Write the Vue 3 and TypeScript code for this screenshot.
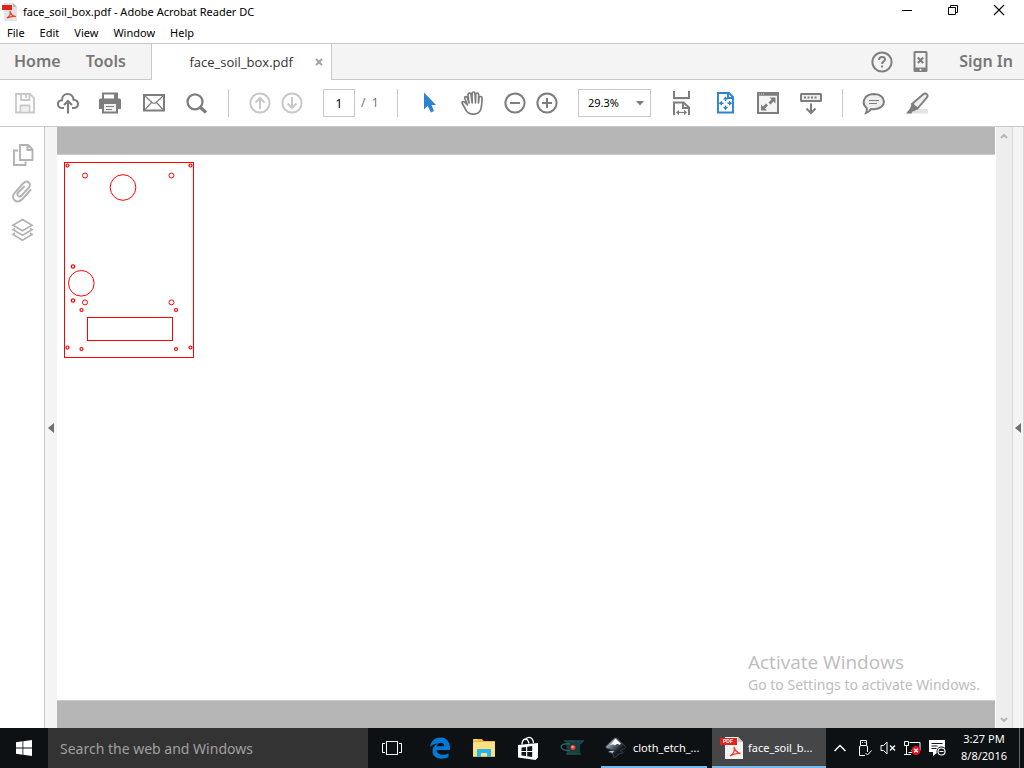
<script setup lang="ts">
import { ref } from 'vue'

const menus: string[] = ['File', 'Edit', 'View', 'Window', 'Help']
const pageNumber = ref('1')
const zoomLevel = ref('29.3%')
const zoomLevels: string[] = ['29.3%', '50%', '100%', '200%']
const query = ref('')

interface Hole { x: number; y: number; r: number }
const holes: Hole[] = [
  { x: 3.5, y: 3.5, r: 1.5 },
  { x: 126.5, y: 3.5, r: 1.5 },
  { x: 21, y: 13.5, r: 2.5 },
  { x: 107.5, y: 13.5, r: 2.5 },
  { x: 59, y: 25.5, r: 12.8 },
  { x: 9, y: 104.5, r: 1.7 },
  { x: 17.3, y: 121.3, r: 12.8 },
  { x: 9, y: 138.5, r: 1.7 },
  { x: 21, y: 140.4, r: 2.5 },
  { x: 107.5, y: 140.4, r: 2.5 },
  { x: 17.5, y: 148, r: 1.5 },
  { x: 112, y: 148, r: 1.5 },
  { x: 3.5, y: 185.5, r: 1.5 },
  { x: 126.5, y: 185.5, r: 1.5 },
  { x: 17.5, y: 187, r: 1.5 },
  { x: 112, y: 187, r: 1.5 }
]
</script>

<template>
  <div class="screen">
    <header class="titlebar">
      <svg class="app-icon" width="18" height="20" viewBox="0 0 18 20">
        <path d="M4 1h9l4 4v14H4z" fill="#e3e3e3" />
        <path d="M13 1l4 4h-4z" fill="#b9b9b9" />
        <rect x="2" y="3" width="10" height="5" fill="#e2231a" />
        <path d="M7 16c3-2 4-4 3-7 1 4 3 5.500 6 5.500-3-.5-6 0-9 1.500z" fill="none" stroke="#e8432e" stroke-width="1.200" />
      </svg>
      <h1 class="title">face_soil_box.pdf - Adobe Acrobat Reader DC</h1>
      <div class="window-buttons">
        <button aria-label="Minimize"><svg width="12" height="12" viewBox="0 0 12 12"><path d="M1 6.500h10" stroke="#000" /></svg></button>
        <button aria-label="Restore"><svg width="12" height="12" viewBox="0 0 12 12"><path d="M1.500 3.500h7v7h-7zM3.500 3V1.500h7v7H9" fill="none" stroke="#000" /></svg></button>
        <button aria-label="Close"><svg width="12" height="12" viewBox="0 0 12 12"><path d="M1 1l10 10M11 1L1 11" stroke="#000" stroke-width="1.100" /></svg></button>
      </div>
    </header>

    <nav class="menubar">
      <button v-for="m in menus" :key="m">{{ m }}</button>
    </nav>

    <div class="tabs">
      <button class="nav-tab">Home</button>
      <button class="nav-tab">Tools</button>
      <div class="doc-tab">
        <span class="doc-name">face_soil_box.pdf</span>
        <button aria-label="Close tab" class="close-tab"><svg width="8" height="8" viewBox="0 0 8 8"><path d="M1 1l6 6M7 1L1 7" stroke="#a2a2a2" stroke-width="1.900" /></svg></button>
      </div>
      <div class="tab-actions">
        <button aria-label="Help">
          <svg width="24" height="24" viewBox="0 0 24 24" fill="none" stroke="#7f7f7f" stroke-width="2">
            <circle cx="12" cy="12" r="9.600" />
            <path d="M9 10c0-4 6-4 6-.8 0 2.300-3 2.300-3 4.800M12 15.500v2" />
          </svg>
        </button>
        <button aria-label="Mobile link">
          <svg width="16" height="24" viewBox="0 0 16 24">
            <path d="M2 1h11a1.500 1.500 0 0 1 1.500 1.500v18A1.500 1.500 0 0 1 13 22H2a1.500 1.500 0 0 1-1.500-1.500v-18A1.500 1.500 0 0 1 2 1zM2.500 3v14.500h10V3z" fill="#7f7f7f" fill-rule="evenodd" />
            <path d="M4.800 7.500l5.400 5.500M10.200 7.500L4.800 13" stroke="#7f7f7f" stroke-width="2.200" />
            <circle cx="7.500" cy="19.800" r="1" fill="#f4f4f4" />
          </svg>
        </button>
        <button class="sign-in">Sign In</button>
      </div>
    </div>

    <div class="toolbar">
      <div class="group file-group">
        <button aria-label="Save" disabled>
          <svg width="25" height="24" viewBox="0 0 25 24" fill="none" stroke="#c8c8c8" stroke-width="1.800">
            <path d="M4 3h14l4 4v14.500H4zM9 3v6h8.500V3M8.500 21v-6.500h9V21" /><path d="M14 4v3" /><path d="M9.500 16h7v4.500h-7z" fill="#eee" stroke="none" />
          </svg>
        </button>
        <button aria-label="Upload">
          <svg width="25" height="24" viewBox="0 0 25 24" fill="none" stroke="#7d7d7d" stroke-width="2">
            <path d="M9 17H7.500C1.500 17 1.500 9.500 7 9.200 6.500 1 18 1 18.500 8.700c6 .3 6 8.300 0 8.300H17" />
            <path d="M13 22.500v-12M9 14l4-4 4 4" stroke-width="2.100" />
          </svg>
        </button>
        <button aria-label="Print">
          <svg width="25" height="24" viewBox="0 0 25 24">
            <path d="M4 1.500h16V8H4z" fill="#7d7d7d" /><path d="M6 3.500h10V8H6z" fill="#fff" /><path d="M16 1.500l4 4h-4z" fill="#7d7d7d" />
            <path d="M2.500 7.500h19A1.500 1.500 0 0 1 23 9v9h-3v4.500H4V18H1V9a1.500 1.500 0 0 1 1.500-1.500z" fill="#7d7d7d" />
            <path d="M6 13h12v7.500H6z" fill="#f2f2f2" /><path d="M8 15.500h8M8 18.500h6" stroke="#7d7d7d" stroke-width="1.200" />
          </svg>
        </button>
        <button aria-label="Email">
          <svg width="25" height="24" viewBox="0 0 25 24" fill="none" stroke="#7d7d7d">
            <rect x="3" y="4" width="20" height="15.500" stroke-width="2" />
            <path d="M4 5l7 6.500q2 1.500 4 0L22 5M4 18.500l6.500-7M22 18.500l-6.500-7" stroke-width="1.200" />
          </svg>
        </button>
        <button aria-label="Find">
          <svg width="25" height="24" viewBox="0 0 25 24" fill="none" stroke="#7d7d7d"><circle cx="11" cy="10.800" r="7.500" stroke-width="2.200" /><path d="M16 16l6 5.500" stroke-width="3.200" /></svg>
        </button>
      </div>
      <div class="sep"></div>
      <div class="group narrow page-group">
        <button aria-label="Previous page" disabled><svg width="24" height="24" viewBox="0 0 24 24" fill="none" stroke="#c8c8c8" stroke-width="2"><circle cx="12" cy="12" r="9.600" /><path d="M12 18V7M7.500 11.500L12 7l4.500 4.500" /></svg></button>
        <button aria-label="Next page" disabled><svg width="24" height="24" viewBox="0 0 24 24" fill="none" stroke="#c8c8c8" stroke-width="2"><circle cx="12" cy="12" r="9.600" /><path d="M12 6v11M7.500 12.500L12 17l4.500-4.500" /></svg></button>
      </div>
      <input v-model="pageNumber" class="page-input" aria-label="Page number" />
      <span class="page-total">/&nbsp; 1</span>
      <div class="sep"></div>
      <div class="group tool-group">
        <button aria-label="Select"><svg width="25" height="24" viewBox="0 0 25 24"><path d="M7 1.500v17l3.700-3.500 3.300 6.500 3-1.500-2.500-6H19z" fill="#2c83d3" /></svg></button>
        <button aria-label="Pan">
          <svg width="25" height="24" viewBox="0 0 25 24" fill="none" stroke="#7d7d7d" stroke-width="1.700" stroke-linejoin="round" stroke-linecap="round">
            <path d="M7.500 14L4.500 11C3 10 1.500 11 2.300 12.500L6.500 20c3 4.500 12 4 14-1 1-2.500 1.500-8 1.500-12 0-2-2.800-2-3 0l-.5 5 .2-8.500c0-2-3-2-3 0L15.500 12 15 2.500c0-2-3-2-3 0l.2 9.500L11 3.500c-.3-2-3.200-1.700-3 .3L9 12 7.300 6.500c-.8-1.700-3-1-2.500 1z" />
          </svg>
        </button>
      </div>
      <div class="group narrow zoom-group">
        <button aria-label="Zoom out"><svg width="24" height="24" viewBox="0 0 24 24" fill="none" stroke="#7d7d7d" stroke-width="2"><circle cx="12" cy="12" r="9.600" /><path d="M7 12h10" /></svg></button>
        <button aria-label="Zoom in"><svg width="24" height="24" viewBox="0 0 24 24" fill="none" stroke="#7d7d7d" stroke-width="2"><circle cx="12" cy="12" r="9.600" /><path d="M7 12h10M12 7v10" /></svg></button>
      </div>
      <div class="zoom-box">
        <select v-model="zoomLevel" aria-label="Zoom level"><option v-for="z in zoomLevels" :key="z">{{ z }}</option></select>
        <svg width="8" height="5" viewBox="0 0 8 5"><path d="M0 0h8L4 4.500z" fill="#7d7d7d" /></svg>
      </div>
      <div class="group view-group">
        <button aria-label="Fit width">
          <svg width="25" height="24" viewBox="0 0 25 24" fill="none" stroke="#7d7d7d" stroke-width="2">
            <path d="M5 0v7h15V0M5 24V11.500h9.500l5.500 5V24M14 12v5h5.500" /><path d="M3 8.500h19" stroke="#eee" stroke-width="1" />
            <path d="M8 21.500h9" stroke-width="1.200" /><path d="M7 21.500l3-2.700v5.400zM18 21.500l-3-2.700v5.400z" fill="#7d7d7d" stroke="none" />
          </svg>
        </button>
        <button aria-label="Fit page">
          <svg width="25" height="24" viewBox="0 0 25 24" fill="none" stroke="#2c83d3" stroke-width="2">
            <path d="M6 2h11l4 4v15.500H6zM16 2v5h5" stroke-width="1.900" />
            <path d="M13.500 6v4M13.500 14.500v4M7.500 12.300h4M15.500 12.300h4" stroke-width="1.400" />
            <path d="M11 8.500l2.500-3 2.500 3zM11 16l2.500 3 2.500-3zM10 9.800l-3 2.500 3 2.500zM17 9.800l3 2.500-3 2.500z" fill="#2c83d3" stroke="none" />
          </svg>
        </button>
        <button aria-label="Full screen">
          <svg width="25" height="24" viewBox="0 0 25 24">
            <rect x="3" y="2" width="20" height="20" fill="#f4f4f4" stroke="#7d7d7d" stroke-width="2" />
            <path d="M3 3.500h20" stroke="#7d7d7d" stroke-width="2.500" /><path d="M4 3h6" stroke="#ccc" stroke-dasharray="1 1" />
            <path d="M20.500 6.500v6l-2-2-3 3-2-2 3-3-2-2zM6 19.500v-6l2 2 3-3 2 2-3 3 2 2z" fill="#7d7d7d" />
          </svg>
        </button>
        <button aria-label="Read mode">
          <svg width="25" height="24" viewBox="0 0 25 24" fill="none" stroke="#7d7d7d" stroke-width="2">
            <rect x="3" y="3" width="20" height="7" rx=".5" fill="#eee" /><path d="M6 6.500h14" stroke-dasharray="2 1.500" />
            <path d="M13 12.500v10M8.500 17.500l4.500 4.500 4.500-4.500" />
          </svg>
        </button>
      </div>
      <div class="sep"></div>
      <div class="group note-group">
        <button aria-label="Add comment">
          <svg width="25" height="24" viewBox="0 0 25 24" fill="#eee" stroke="#7d7d7d" stroke-width="2">
            <path d="M12.200 3c13 .3 13 15-.2 15.200L9 18c-1 2-3 3.500-5 4 .8-1.500 1-3.500.6-5C-.5 13 1 3 12.200 3z" /><path d="M7 9.500h10M7 12.500h8" stroke-width="1.200" />
          </svg>
        </button>
        <button aria-label="Highlight text">
          <svg width="25" height="24" viewBox="0 0 25 24">
            <path d="M8 18h15v4.500H3z" fill="#e4e4e4" />
            <path d="M7 13L18 3.500c3-2.500 6 .3 3.800 3.200L12.500 17.500z" fill="#eee" stroke="#7d7d7d" stroke-width="1.800" />
            <path d="M7 12l6.200 6-3 1.500-3 1.200-.7 1.800H1l4-5z" fill="#7d7d7d" />
          </svg>
        </button>
      </div>
    </div>

    <main class="workspace">
      <aside class="rail">
        <button aria-label="Page thumbnails">
          <svg width="24" height="24" viewBox="0 0 24 24" fill="none" stroke="#b3b3b3" stroke-width="1.900">
            <path d="M10 2h8l4.500 4.500V17H10zM17.500 2v5H22M8 7.500H4V22h11.500v-3.500" />
          </svg>
        </button>
        <button aria-label="Attachments">
          <svg width="24" height="24" viewBox="0 0 24 24" fill="none" stroke="#b3b3b3" stroke-width="1.900" stroke-linecap="round">
            <path d="M20.500 11l-8.500 9.500c-5.500 5-12-1-7.500-6.500L13 4.500c4.500-4.500 9 .5 5.500 4.500l-7 7.500c-2.500 2.500-5.500-.5-3.300-3L14 7.800" />
          </svg>
        </button>
        <button aria-label="Layers">
          <svg width="24" height="24" viewBox="0 0 24 24" fill="none" stroke="#b3b3b3" stroke-width="1.700">
            <path d="M12.500 1.500L22 7.300l-9.500 5.500L3 7.300zM5 10.500l-2 1.300 9.500 5.500 9.500-5.500-2-1.300M5 15l-2 1.500 9.500 5.700L22 16.500 20 15" />
          </svg>
        </button>
      </aside>
      <button class="grip" aria-label="Show navigation pane"><svg width="6" height="10" viewBox="0 0 6 10"><path d="M6 0v10L0 5z" fill="#707070" /></svg></button>
      <section class="document">
        <div class="page">
          <svg width="130" height="196" viewBox="0 0 130 196" fill="none" stroke="#f00" stroke-width="1">
            <rect x=".5" y=".5" width="129" height="195" />
            <rect x="23.500" y="155.500" width="85" height="23" />
            <circle v-for="(h, i) in holes" :key="i" :cx="h.x" :cy="h.y" :r="h.r" :stroke-width="h.r < 2 ? 1.2 : 1" />
          </svg>
        </div>
        <div class="watermark">
          <p class="wm-title">Activate Windows</p>
          <p class="wm-text">Go to Settings to activate Windows.</p>
        </div>
      </section>
      <div class="scrollbar">
        <button aria-label="Scroll up"><svg width="8" height="6" viewBox="0 0 8 6"><path d="M1 5l3-3 3 3" fill="none" stroke="#b5b5b5" stroke-width="2" /></svg></button>
        <button aria-label="Scroll down"><svg width="8" height="6" viewBox="0 0 8 6"><path d="M1 1l3 3 3-3" fill="none" stroke="#b5b5b5" stroke-width="2" /></svg></button>
      </div>
      <button class="grip right" aria-label="Show tools pane"><svg width="6" height="10" viewBox="0 0 6 10"><path d="M6 0v10L0 5z" fill="#707070" /></svg></button>
    </main>

    <footer class="taskbar">
      <button class="start" aria-label="Start">
        <svg width="16" height="16" viewBox="0 0 16 16" fill="#fff"><path d="M0 2.300L6.500 1.300v6.200H0zM7.300 1.200L16 0v7.500H7.300zM0 8.500h6.500v6.200L0 13.800zM7.300 8.500H16V16l-8.700-1.200z" /></svg>
      </button>
      <input v-model="query" class="search" aria-label="Search" placeholder="Search the web and Windows" />
      <button class="pin view" aria-label="Task view">
        <svg width="20" height="14" viewBox="0 0 20 14" fill="none" stroke="#fff"><rect x="4.500" y=".5" width="11" height="13" /><path d="M3 2.500H.5v9H3M17 2.500h2.500v9H17" /></svg>
      </button>
      <button class="pin" aria-label="Edge">
        <svg width="22" height="22" viewBox="0 0 22 22"><path d="M1 10C2 3.500 6.500.5 11.500.5 18 .5 21 5.500 21 10.500V13H7.500c.5 5 7 6 12 3.200v4C14 22.500 4 23 3.500 14.500c0-4 2.500-6.800 5.500-8C5.500 6.500 3 7.800 1 10zM7.700 9.300h7.500C15.300 4.500 8.300 4.500 7.700 9.300z" fill="#0078d7" fill-rule="evenodd" /></svg>
      </button>
      <button class="pin" aria-label="File Explorer">
        <svg width="22" height="20" viewBox="0 0 22 20"><path d="M0 1h9l1.500 2H22v16H0z" fill="#e9b93a" /><path d="M1 4h21v14H0V5z" fill="#fbdf80" /><path d="M1.500 1.800h3" stroke="#fff4b8" /><path d="M4 11h14v8h-4v-4H8v4H4z" fill="#27b5f0" /></svg>
      </button>
      <button class="pin" aria-label="Store">
        <svg width="22" height="24" viewBox="0 0 22 24"><path d="M1 9l20-2v14.500L18.500 24 1 21.500z" fill="#fff" /><path d="M5 8.500C5 3.500 10-.5 12 7.500M8 4C11-.5 16 1 16.500 7" fill="none" stroke="#fff" stroke-width="1.300" /><path d="M4.500 11.500l4.500-.6v4H4.500zM10.200 10.700l5-.6V15h-5zM4.500 16H9v4l-4.500-.6zM10.200 16h5v5l-5-.7z" fill="#111416" /></svg>
      </button>
      <button class="pin" aria-label="Webcam">
        <svg width="24" height="18" viewBox="0 0 24 18"><path d="M6 2h14v13H7z" fill="#143f43" /><path d="M4 2h19l-3 3M6 15h15" fill="none" stroke="#1d4f52" stroke-width="1.500" /><path d="M10 5C4 4 1 6 1 8s4 4 9 3.500" fill="none" stroke="#2b6466" stroke-width="1.300" /><circle cx="13" cy="8.500" r="4" fill="#2c3436" /><circle cx="13" cy="8.500" r="2.500" fill="#d8453b" /><circle cx="12.500" cy="8" r="1.200" fill="#ff9d8e" /></svg>
      </button>
      <button class="task">
        <svg width="24" height="24" viewBox="0 0 24 24"><defs><linearGradient id="ink" x1="0" x2="1" y2="1"><stop offset="0" stop-color="#eef6ff" /><stop offset=".4" stop-color="#5a6c80" /><stop offset=".65" stop-color="#15191e" /></linearGradient></defs><path d="M11.500 2c1 0 1.800.7 2.500 1.500L21 10c1.500 1.700 0 2.700-2 3.300l-3 1.200c1 1 4 1 3 2.300-1.500.9-4 .5-5 1.700-.8 2.500-3 3-5 2.500 0-1.500 1.500-1.500.5-2.500L4.500 16c1-1.500 4-.5 4.500-2-2-1-8-1-7-3.500L9 3.500c.8-.8 1.500-1.500 2.500-1.500z" fill="url(#ink)" stroke="#46515c" stroke-width=".7" /><path d="M11.500 2.800l5.500 5-1.500 1-2.500-1-2 1.500-2.500-1-2.500 1z" fill="#fff" /><path d="M4.500 15h5.500l-1.500 2z" fill="#bdccdb" /></svg>
        <span>cloth_etch_...</span>
      </button>
      <button class="task active">
        <svg width="24" height="24" viewBox="0 0 24 24"><path d="M5 1h13l5 5v17H5z" fill="#f3f3f3" /><path d="M18 1l5 5h-5z" fill="#c5c5c5" /><path d="M0 2h17v7H0z" fill="#e2231a" /><text x="3" y="7" class="pdf-label">PDF</text><path d="M10 20c4-2.500 5-5.500 4-9 1 4 3 5.500 6.500 6.500-3.500-.7-6.500 0-10.500 2.500z" fill="none" stroke="#e8432e" stroke-width="1.300" /></svg>
        <span>face_soil_b...</span>
      </button>
      <div class="tray">
        <button aria-label="Show hidden icons"><svg width="12" height="8" viewBox="0 0 12 8"><path d="M.5 7L6 1.500 11.500 7" fill="none" stroke="#fff" stroke-width="1.500" /></svg></button>
        <button aria-label="USB device"><svg width="14" height="18" viewBox="0 0 14 18" fill="none" stroke="#fff"><path d="M2.500 6V1.500h6V6M4 3.500h1M6.500 3.500h1M7 16.500H1.500V8q0-1.500 1.500-1.500h5q1.500 0 1.500 1.500v5" /><path d="M7.500 14l2 2 4-4.500" /></svg></button>
        <button aria-label="Volume muted"><svg width="16" height="14" viewBox="0 0 16 14" fill="none" stroke="#fff"><path d="M1 4.500h2.500L7 1v12L3.500 9.500H1z" /><path d="M10 4.500l5 5M15 4.500l-5 5" stroke-width="1.300" /></svg></button>
        <button aria-label="Network disconnected"><svg width="17" height="16" viewBox="0 0 17 16" fill="none" stroke="#fff"><path d="M5.500 2.500h10.500v8H7M.5 1.500h4v4h-4zM2.500 6v8.500M0 14.500h7M4.500 12.500h4" /><circle cx="12" cy="10.500" r="4.500" fill="#e81123" stroke="none" /><path d="M10.200 8.700l3.600 3.600M13.800 8.700l-3.600 3.600" stroke-width="1.300" /></svg></button>
        <button aria-label="Notifications"><svg width="17" height="18" viewBox="0 0 17 18"><path d="M0 1h16v12H9l-5 4v-4H0z" fill="#fff" /><path d="M2.500 4.500h11M2.500 7h6M2.500 9.500h5" stroke="#15181a" /><circle cx="12.500" cy="12.500" r="5" fill="#111416" /><circle cx="12.500" cy="12.500" r="3.500" fill="none" stroke="#fff" stroke-width="1.200" /><path d="M10.500 12.500h4" stroke="#fff" /></svg></button>
        <button class="clock"><span>3:27 PM</span><span>8/8/2016</span></button>
        <button class="desktop" aria-label="Show desktop"></button>
      </div>
    </footer>
  </div>
</template>

<style>
html, body { margin: 0; height: 100%; }
</style>

<style scoped>
.screen {
  display: flex;
  flex-direction: column;
  height: 100vh;
  overflow: hidden;
  background: #fff;
  color: #000;
  font: 11px/16px "Noto Sans", "Open Sans", sans-serif;
}
button, input, select { font: inherit; color: inherit; box-sizing: border-box; }
button { display: flex; align-items: center; justify-content: center; flex: none; margin: 0; padding: 0; border: 0; background: none; white-space: nowrap; }
svg { display: block; flex: none; }

.titlebar { display: flex; align-items: center; height: 23px; flex: none; }
.app-icon { margin-right: 5px; }
.title { flex: 1; margin: 0; font-size: 11px; font-weight: 400; line-height: 16px; }
.window-buttons { display: flex; height: 20px; align-self: flex-start; }
.window-buttons button { width: 46px; padding-right: 4px; }

.menubar { display: flex; gap: 15px; height: 20px; flex: none; padding-left: 7px; }

.tabs { display: flex; gap: 25px; height: 35px; flex: none; padding-left: 14px; border-top: 1px solid #c9c9c9; border-bottom: 1px solid #c9c9c9; background: #f4f4f4; color: #777; }
.nav-tab, .sign-in { padding-bottom: 2px; font-size: 16px; font-weight: 600; }
.doc-tab { display: flex; align-items: center; justify-content: flex-end; gap: 22px; box-sizing: border-box; width: 181px; margin-bottom: -1px; padding-right: 8px; border: solid #c9c9c9; border-width: 0 1px; background: #fff; color: #333; }
.doc-name { font: 13px/16px "Open Sans", sans-serif; }
.tab-actions { display: flex; align-items: center; gap: 19px; margin-left: auto; padding-right: 11px; }
.sign-in { margin-left: 11px; }

.toolbar { display: flex; align-items: center; height: 46px; flex: none; border-bottom: 1px solid #c9c9c9; }
.group { display: flex; flex: none; }
.group button { width: 43px; height: 32px; }
.narrow button { width: 32px; }
.file-group { margin-left: 3px; }
.sep { width: 1px; height: 28px; margin: 0 10px; flex: none; background: #c9c9c9; }
.page-group { margin-left: 5px; }
.page-input { width: 32px; height: 28px; margin-left: 15px; padding: 0; border: 1px solid #c9c9c9; border-radius: 0; font-size: 12px; text-align: center; }
.page-total { width: 26px; margin-left: 6px; color: #777; font-size: 12px; }
.zoom-group { margin-left: 5px; }
.zoom-box { display: grid; align-items: center; width: 73px; margin: 0 9px 0 15px; flex: none; }
.zoom-box select { grid-area: 1 / 1; width: 73px; height: 28px; padding: 0 0 0 9px; border: 1px solid #c9c9c9; border-radius: 0; background: #fff; appearance: none; }
.zoom-box svg { grid-area: 1 / 1; justify-self: end; margin-right: 7px; pointer-events: none; }

.workspace { display: flex; flex: 1; min-height: 0; }
.rail { display: flex; flex-direction: column; align-items: center; gap: 12px; box-sizing: border-box; width: 45px; flex: none; padding-top: 16px; border-right: 1px solid #c9c9c9; }
.rail button:last-child { margin-top: 3px; }
.grip { width: 12px; background: #f4f4f4; }
.right { border: solid #d9d9d9; border-width: 0 1px; }
.document { position: relative; display: flex; flex: 1; padding: 27px 0; background: #b6b6b6; }
.page { flex: 1; padding: 7px; border-top: 1px solid #ccc; border-bottom: 1px solid #ccc; background: #fff; }
.watermark { position: absolute; right: 11px; bottom: 32px; width: 236px; color: #bdbdbd; }
.watermark p { margin: 0; white-space: nowrap; }
.wm-title { font: 19px/24px "Open Sans", sans-serif; }
.wm-text { font-size: 14px; line-height: 22px; }
.scrollbar { display: flex; flex-direction: column; justify-content: space-between; width: 16px; flex: none; border-left: 1px solid #fff; background: #eee; }
.scrollbar button { height: 17px; }

.taskbar { display: flex; height: 40px; flex: none; background: #0e1113; color: #fff; }
.start { width: 48px; }
.search { width: 320px; flex: 0 1 auto; padding: 2px 12px 0; border: 0; background: #333; font-size: 14px; }
.search::placeholder { color: #a0a0a0; opacity: 1; }
.pin { width: 44px; }
.view { width: 48px; margin-right: 2px; }
.task { gap: 5px; justify-content: flex-start; width: 106px; margin-left: 7px; padding: 2px 3px 0; border-bottom: 2px solid #76b9ed; }
.active { width: 114px; margin-left: 5px; padding-left: 8px; gap: 4px; background: #444647; }
.pdf-label { font: bold 5px "Liberation Sans", sans-serif; fill: #fff; }
.tray { display: flex; align-items: stretch; gap: 8px; margin-left: auto; }
.tray button:first-child { margin-right: 4px; }
.clock { flex-direction: column; width: 60px; padding-bottom: 2px; line-height: 17px; }
.desktop { width: 5px; margin-left: -3px; border-left: 1px solid #666; }
</style>
